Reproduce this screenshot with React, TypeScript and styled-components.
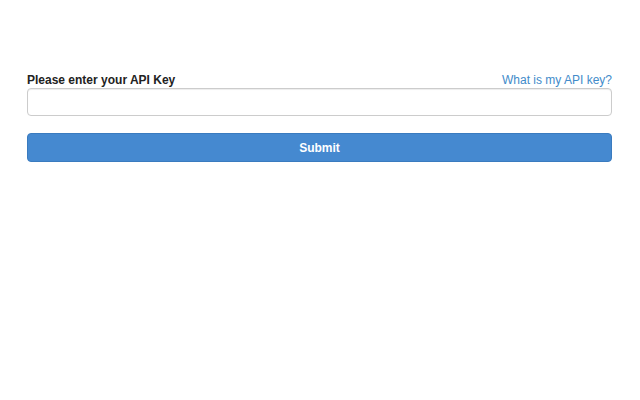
import React from 'react'
import styled, { createGlobalStyle } from 'styled-components'

const Global = createGlobalStyle`
body {
  margin: 0;
  background: #fff;
  font-family: "Liberation Sans", Arial, sans-serif;
  color: #333;
}
`

const App = () => {
  return (
    <>
      <Global />
      <Container>
        <LabelRow>
          <Label htmlFor="apikey">Please enter your API Key</Label>
          <HelpLink href="#">What is my API key?</HelpLink>
        </LabelRow>
        <Input id="apikey" type="text" />
        <Button>Submit</Button>
      </Container>
    </>
  )
}

export default App

const Container = styled.div`
padding: 71px 28px 0 27px;
display: flex;
flex-direction: column;
`
const LabelRow = styled.div`
display: flex;
justify-content: space-between;
align-items: flex-end;
height: 16px;
padding-bottom: 1px;
`
const Label = styled.label`
font-size: 12px;
font-weight: bold;
color: #222;
`
const HelpLink = styled.a`
font-size: 12px;
color: #428bca;
text-decoration: none;
`
const Input = styled.input`
box-sizing: border-box;
height: 28px;
margin-top: 0;
border: 1px solid #ccc;
border-radius: 4px;
box-shadow: inset 0 1px 1px rgba(0,0,0,0.075);
padding: 4px 8px;
font-size: 12px;
outline: none;
`
const Button = styled.button`
box-sizing: border-box;
height: 29px;
margin-top: 17px;
background-color: #4589d0;
border: 1px solid #3a7bbf;
border-radius: 4px;
color: white;
font-family: "Liberation Sans", Arial, sans-serif;
font-size: 12px;
font-weight: bold;
cursor: pointer;
`
